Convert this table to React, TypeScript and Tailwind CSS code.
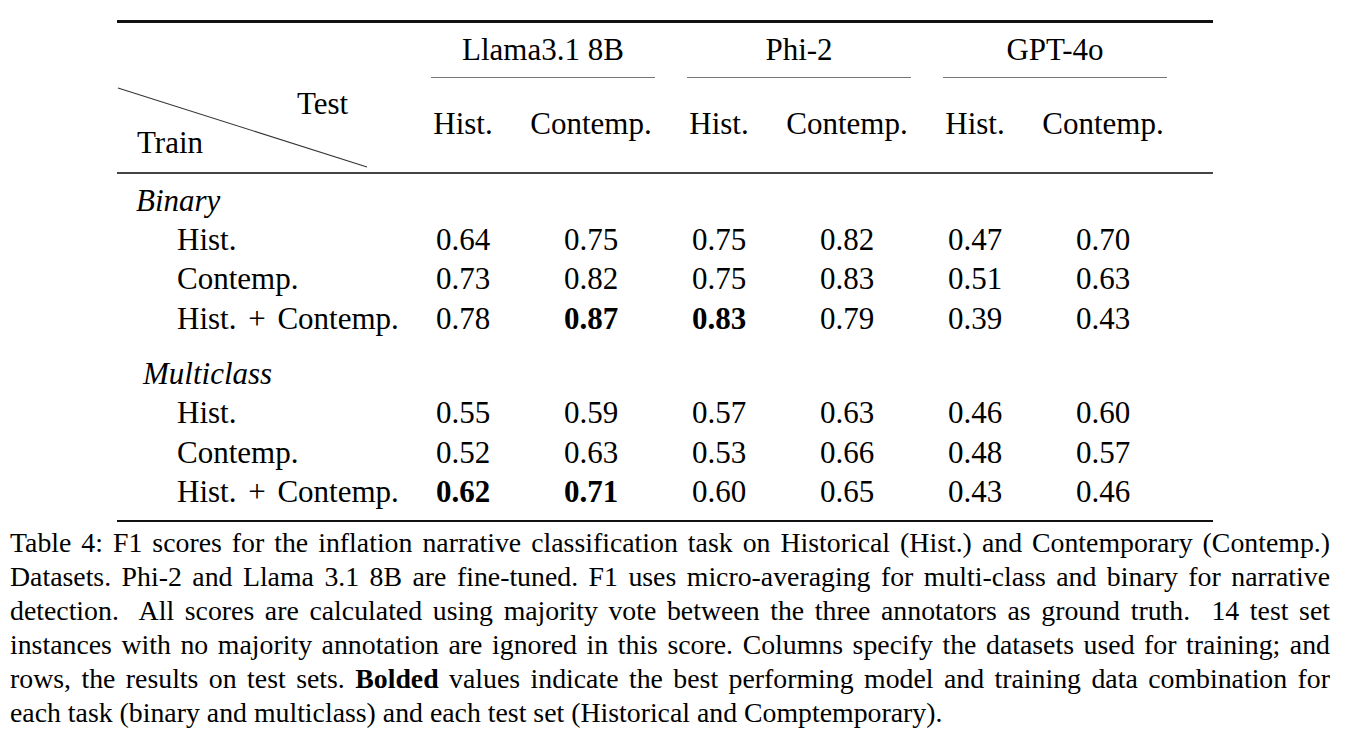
const models = ["Llama3.1 8B", "Phi-2", "GPT-4o"];

type Cell = { v: string; b?: boolean };

const groups: { name: string; pad: string; rows: { label: string; cells: Cell[] }[] }[] = [
  {
    name: "Binary",
    pad: "pl-[19px]",
    rows: [
      { label: "Hist.", cells: [{ v: "0.64" }, { v: "0.75" }, { v: "0.75" }, { v: "0.82" }, { v: "0.47" }, { v: "0.70" }] },
      { label: "Contemp.", cells: [{ v: "0.73" }, { v: "0.82" }, { v: "0.75" }, { v: "0.83" }, { v: "0.51" }, { v: "0.63" }] },
      {
        label: "Hist. + Contemp.",
        cells: [{ v: "0.78" }, { v: "0.87", b: true }, { v: "0.83", b: true }, { v: "0.79" }, { v: "0.39" }, { v: "0.43" }],
      },
    ],
  },
  {
    name: "Multiclass",
    pad: "pl-[26px]",
    rows: [
      { label: "Hist.", cells: [{ v: "0.55" }, { v: "0.59" }, { v: "0.57" }, { v: "0.63" }, { v: "0.46" }, { v: "0.60" }] },
      { label: "Contemp.", cells: [{ v: "0.52" }, { v: "0.63" }, { v: "0.53" }, { v: "0.66" }, { v: "0.48" }, { v: "0.57" }] },
      {
        label: "Hist. + Contemp.",
        cells: [{ v: "0.62", b: true }, { v: "0.71", b: true }, { v: "0.60" }, { v: "0.65" }, { v: "0.43" }, { v: "0.46" }],
      },
    ],
  },
];

const colW = ["w-[96px]", "w-[160px]", "w-[96px]", "w-[160px]", "w-[96px]", "w-[160px]"];

const caption = [
  "Table 4: F1 scores for the inflation narrative classification task on Historical (Hist.) and Contemporary (Contemp.)",
  "Datasets. Phi-2 and Llama 3.1 8B are fine-tuned. F1 uses micro-averaging for multi-class and binary for narrative",
  "detection.  All scores are calculated using majority vote between the three annotators as ground truth.  14 test set",
  "instances with no majority annotation are ignored in this score. Columns specify the datasets used for training; and",
];

function RowLabel({ label }: { label: string }) {
  if (!label.includes("+")) return <>{label}</>;
  return (
    <>
      Hist.<span className="px-[4px]"> + </span>Contemp.
    </>
  );
}

function DataRow({ label, cells }: { label: string; cells: Cell[] }) {
  return (
    <div className="flex h-[39.5px] items-center leading-[39.5px]">
      <div className="w-[298px] pl-[60px] whitespace-pre">
        <RowLabel label={label} />
      </div>
      {cells.map((c, i) => (
        <div key={i} className={`${colW[i]} text-center ${c.b ? "font-bold" : ""}`}>
          {c.v}
        </div>
      ))}
    </div>
  );
}

export default function App() {
  return (
    <div className="w-[1350px] h-[740px] bg-white text-black font-['Liberation_Serif',serif] overflow-hidden">
      <div className="ml-[117px] w-[1096px] pt-[20px] text-[31px]">
        <div className="h-[2.5px] bg-[#111]" />

        <div className="flex h-[54px] items-center leading-[39px]">
          <div className="w-[298px]" />
          {models.map((m) => (
            <div key={m} className="w-[256px] text-center">
              {m}
            </div>
          ))}
        </div>

        <div className="flex">
          <div className="w-[298px]" />
          {models.map((m) => (
            <div key={m} className="w-[256px] px-[16px]">
              <div className="h-[1px] bg-[#777]" />
            </div>
          ))}
        </div>

        <div className="flex h-[94px]">
          <div className="relative w-[298px] pt-[6px] leading-[39.5px]">
            <svg className="absolute left-0 top-0" width="298" height="94">
              <line x1="1" y1="10" x2="250" y2="89" stroke="#333" strokeWidth="1.1" />
            </svg>
            <div className="pl-[180px]">Test</div>
            <div className="pl-[20px]">Train</div>
          </div>
          {["Hist.", "Contemp.", "Hist.", "Contemp.", "Hist.", "Contemp."].map((h, i) => (
            <div key={i} className={`${colW[i]} flex items-center justify-center`}>
              {h}
            </div>
          ))}
        </div>

        <div className="h-[2px] bg-[#444]" />

        {groups.map((g, gi) => (
          <div key={g.name} className={gi === 0 ? "pt-[7px]" : "pt-[16px]"}>
            <div className={`h-[39px] leading-[39px] italic ${g.pad}`}>{g.name}</div>
            {g.rows.map((r) => (
              <DataRow key={r.label} label={r.label} cells={r.cells} />
            ))}
          </div>
        ))}

        <div className="mt-[8px] h-[2.5px] bg-[#111]" />
      </div>

      <div className="ml-[10px] w-[1320px] pt-[4px] text-[27.8px] leading-[34px]">
        {caption.map((line, i) => (
          <div key={i} className="text-justify [text-align-last:justify] whitespace-pre">
            {line}
          </div>
        ))}
        <div className="text-justify [text-align-last:justify] whitespace-pre">
          rows, the results on test sets. <b>Bolded</b> values indicate the best performing model and training data combination for
        </div>
        <div>each task (binary and multiclass) and each test set (Historical and Comptemporary).</div>
      </div>
    </div>
  );
}
